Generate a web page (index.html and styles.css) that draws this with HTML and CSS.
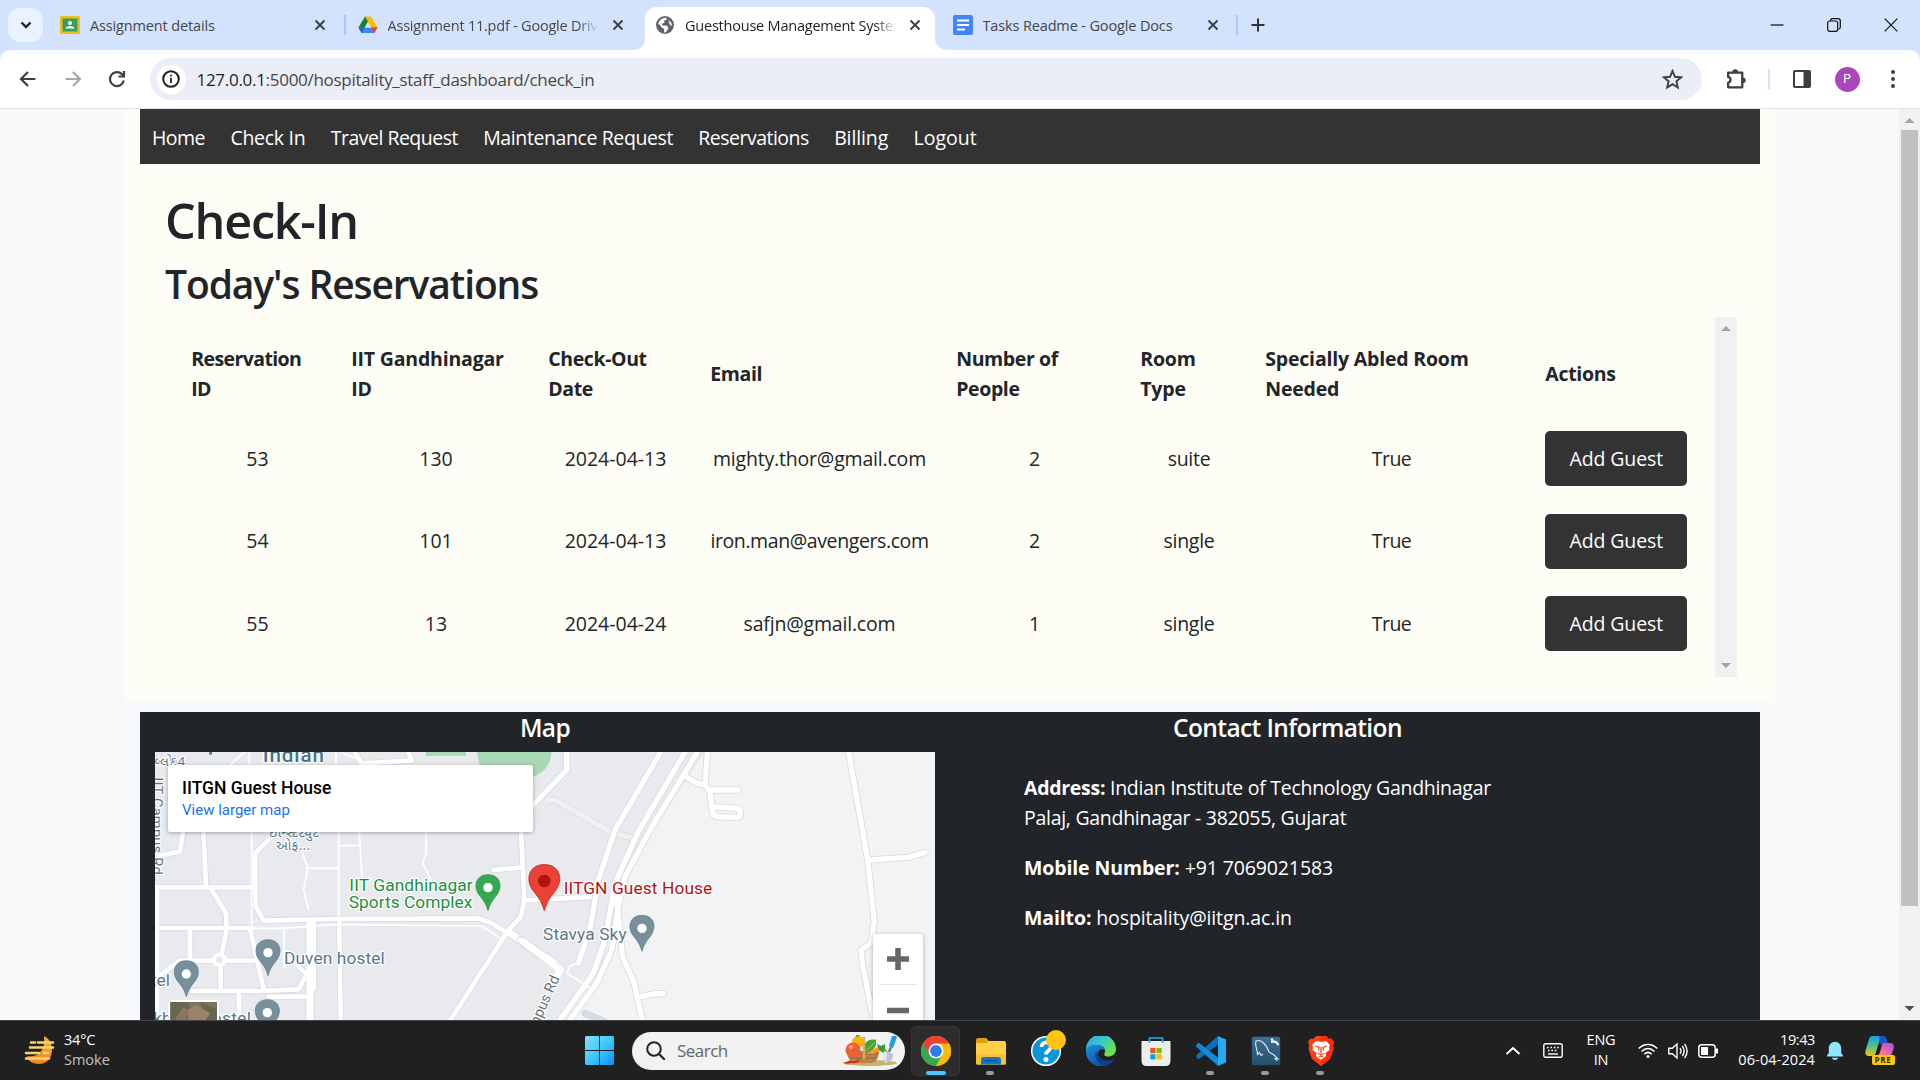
FILE: index.html
```html
<!DOCTYPE html>
<html lang="en">
<head>
<meta charset="utf-8">
<title>Guesthouse Management System</title>
<link rel="stylesheet" href="styles.css">
</head>
<body>
<div class="screen">
  <header class="tabstrip">
    <button class="tab-search"><svg width="14" height="14" viewBox="0 0 14 14" fill="none" stroke="#1f1f1f" stroke-width="2.4"><path d="M2.5 4.5 7 9l4.500-4.500"/></svg></button>
    <div class="tab sep">
      <svg class="fav" viewBox="0 0 20 20"><rect y="1" width="20" height="18" rx="1.500" fill="#f6bd18"/><rect x="2.500" y="3.500" width="15" height="13" fill="#34a05c"/><circle cx="10" cy="8" r="2" fill="#fff"/><path d="M5.500 13.500c0-3.500 9-3.500 9 0z" fill="#fff"/></svg>
      <span class="tab-title">Assignment details</span>
      <svg class="x" viewBox="0 0 20 20"><path d="M5.500 5.500l9 9M14.500 5.500l-9 9"/></svg>
    </div>
    <div class="tab">
      <svg class="fav" viewBox="0 0 20 20"><path d="M7 1.500h6l6.500 11H13z" fill="#fbbc04"/><path d="M7 1.500 10 6.500 3.700 18 .5 12.500z" fill="#188038"/><path d="M.5 12.500h19L16.300 18H3.700z" fill="#4285f4"/><path d="M.5 12.500h6.300L3.700 18z" fill="#1967d2"/><path d="M13.200 12.500h6.300L16.300 18z" fill="#ea4335"/><path d="M10 7l3 5.500H7z" fill="#d3e2fd"/></svg>
      <span class="tab-title fade">Assignment 11.pdf - Google Drive</span>
      <svg class="x" viewBox="0 0 20 20"><path d="M5.500 5.500l9 9M14.500 5.500l-9 9"/></svg>
    </div>
    <div class="tab active">
      <svg class="tab-shape" viewBox="0 0 316 43"><path d="M0 43c8 0 12-5 12-12V12C12 5 17 0 24 0h266c7 0 12 5 12 12v19c0 7 5 12 14 12z" fill="#fff"/></svg>
      <svg class="fav" viewBox="0 0 20 20"><circle cx="10" cy="10" r="9" fill="#5f6368"/><path d="M3 9c1-4 4-6.300 8-6.300l1 1.800-3 1.300.5 2-2.500 1 .3 1.700 4.700.2 1.500 2.300-2.500 4.300-2 .2.200-3.500-2.700-1.700L5 10z" fill="#fff"/><path d="M13.500 5l3 2.500.8 4-3.300-2.500z" fill="#fff" opacity=".8"/></svg>
      <span class="tab-title fade">Guesthouse Management System</span>
      <svg class="x" viewBox="0 0 20 20"><path d="M5.500 5.500l9 9M14.500 5.500l-9 9"/></svg>
    </div>
    <div class="tab sep">
      <svg class="fav" viewBox="0 0 20 20"><rect width="20" height="20" rx="2" fill="#4285f4"/><path d="M4 5.500h12M4 10h12M4 14.500h8" stroke="#fff" stroke-width="2"/></svg>
      <span class="tab-title">Tasks Readme - Google Docs</span>
      <svg class="x" viewBox="0 0 20 20"><path d="M5.500 5.500l9 9M14.500 5.500l-9 9"/></svg>
    </div>
    <svg class="new-tab" viewBox="0 0 20 20" stroke="#303134" stroke-width="2"><path d="M10 3.500v13M3.500 10h13"/></svg>
    <div class="win-controls">
      <svg viewBox="0 0 14 14"><path d="M.5 7h13"/></svg>
      <svg viewBox="0 0 14 14"><rect x=".7" y="3" width="10" height="10.300" rx="2"/><path d="M3.500 3V2.500A1.800 1.800 0 0 1 5 .7h6a2.300 2.300 0 0 1 2.300 2.300v6.500a1.800 1.800 0 0 1-1.800 1.500"/></svg>
      <svg viewBox="0 0 14 14"><path d="M.7.700l12.600 12.600M13.300.700.7 13.300"/></svg>
    </div>
  </header>

  <div class="toolbar-back"><div class="toolbar">
    <svg class="tb" viewBox="0 0 20 20" stroke="#3c4043"><path d="M17.500 10H3.500M10 3 3 10l7 7"/></svg>
    <svg class="tb" viewBox="0 0 20 20" stroke="#a8a9ab"><path d="M2.500 10h14M10 3l7 7-7 7"/></svg>
    <svg class="tb" viewBox="0 0 20 20" stroke="#3c4043"><path d="M16.800 11.500A7 7 0 1 1 15 5.200l2 2"/><path d="M17 2v5.500h-5.500"/></svg>
    <div class="omnibox">
      <span class="info"><svg width="20" height="20" viewBox="0 0 20 20"><circle cx="10" cy="10" r="7.800" fill="none" stroke="#1f1f1f" stroke-width="2"/><path d="M10 9v5M10 5.800v1.700" stroke="#1f1f1f" stroke-width="1.800"/></svg></span>
      <span class="url"><b>127.0.0.1</b>:5000/hospitality_staff_dashboard/check_in</span>
      <svg class="star" viewBox="0 0 20 20"><path d="M10 1.800l2.300 5.600 6 .5-4.600 3.900 1.400 5.900-5.100-3.200-5.100 3.200 1.400-5.900L1.700 7.900l6-.5z" fill="none" stroke="#3c4043" stroke-width="1.800"/></svg>
    </div>
    <svg class="puzzle" viewBox="0 0 22 22"><path d="M3 4.500h13.500V18.500H3v-4.500c3-.5 3-5 0-5.500z" fill="none" stroke="#3c4043" stroke-width="2.200" stroke-linejoin="round"/><path d="M7.500 4a2.300 2.300 0 0 1 4.600 0zM17 9.500a2.300 2.300 0 0 1 0 4.600z" fill="#3c4043" stroke="#3c4043"/></svg>
    <span class="tb-sep"></span>
    <svg class="panel" viewBox="0 0 20 20"><rect x="2" y="2" width="16" height="16" rx="1" fill="none" stroke="#3c4043" stroke-width="2"/><path d="M11.500 2H18v16h-6.500z" fill="#3c4043"/></svg>
    <span class="avatar">P</span>
    <svg class="kebab" viewBox="0 0 6 20" fill="#3c4043"><circle cx="3" cy="3" r="2"/><circle cx="3" cy="10" r="2"/><circle cx="3" cy="17" r="2"/></svg>
  </div></div>

  <div class="viewport">
    <div class="page">
      <main class="container">
        <nav class="navbar">
          <a class="t5">Home</a><a class="t3">Check In</a><a class="t5">Travel Request</a><a class="t4">Maintenance Request</a><a class="t5">Reservations</a><a class="t1">Billing</a><a>Logout</a>
        </nav>
        <section class="content">
          <h1>Check-In</h1>
          <h2>Today's Reservations</h2>
          <div class="list">
            <table>
              <colgroup><col class="c1"><col class="c2"><col class="c3"><col class="c4"><col class="c5"><col class="c6"><col class="c7"><col class="c8"></colgroup>
              <thead><tr><th class="t6">Reservation<br>ID</th><th class="t2">IIT Gandhinagar<br>ID</th><th class="t4">Check-Out<br>Date</th><th class="t4">Email</th><th class="t4">Number of<br>People</th><th class="t2">Room<br>Type</th><th class="t2">Specially Abled Room<br>Needed</th><th class="t3">Actions</th></tr></thead>
              <tbody>
                <tr><td>53</td><td>130</td><td>2024-04-13</td><td class="t2">mighty.thor@gmail.com</td><td>2</td><td class="t3">suite</td><td class="t5">True</td><td><button class="btn">Add Guest</button></td></tr>
                <tr><td>54</td><td>101</td><td>2024-04-13</td><td class="t4">iron.man@avengers.com</td><td>2</td><td class="t3">single</td><td class="t5">True</td><td><button class="btn">Add Guest</button></td></tr>
                <tr><td>55</td><td>13</td><td>2024-04-24</td><td class="t2">safjn@gmail.com</td><td>1</td><td class="t3">single</td><td class="t5">True</td><td><button class="btn">Add Guest</button></td></tr>
              </tbody>
            </table>
            <div class="list-scroll"><span class="up"></span><span class="down"></span></div>
          </div>
        </section>
      </main>
      <footer class="footer">
        <div class="map-col">
          <h5>Map</h5>
          <div class="map">
            <svg width="780" height="268" viewBox="0 0 780 268">
              <rect width="780" height="268" fill="#e8eaed"/>
              <g transform="translate(-35 -62) scale(.33333)">
                <path d="M1755 186 1560 480 1480 700 1440 850 1310 1000H2500V186z" fill="#f1f3f4"/>
                <path d="M918 180h120v17H918zM1072 186h222c0 40-30 80-90 80h-90c-30-20-42-50-42-80z" fill="#a8d8b4"/>
                <g class="rd edge">
                  <path class="w3" d="M105 592H402M105 714H400M105 499 180 485 190 420M250 420l8 170M405 570V490L470 425M272 595l46 75 2 45-18 95v90M405 490l2 160 25 42 210-5 435-2 38 15 190 115M210 714v95M390 714l40 180M178 812H400M178 812l-60 45M215 903l200 0 120-5 25-45-50-45M705 190l20 30 150-8-12-30M357 905V995M445 920h110M1120 540l85-8M1203 420l10 210-10 50L1165 720 985 1000M1210 632l210-12M658 695 662 1000"/>
                  <path class="w5" d="M570 700V990M578 700V895M1165 725l120 85"/>
                </g>
                <g class="rd">
                  <path class="w1" d="M395 430V715h90l160-12 440 5 62 40M492 712v120M548 490l15 45-12 65 15 60M560 535h95M656 430V690M656 467h62M718 430l8 130M918 430v60l-10 30 40 80M668 190l38 15M330 225l45-40M648 190V225M388 190V225"/>
                  <path class="w3" d="M105 592H402M105 714H400M105 499 180 485 190 420M250 420l8 170M405 570V490L470 425M272 595l46 75 2 45-18 95v90M405 490l2 160 25 42 210-5 435-2 38 15 190 115M210 714v95M390 714l40 180M178 812H400M178 812l-60 45M215 903l200 0 120-5 25-45-50-45M705 190l20 30 150-8-12-30M357 905V995M445 920h110M1120 540l85-8M1203 420l10 210-10 50L1165 720 985 1000M1210 632l210-12M658 695 662 1000"/>
                  <path class="w5" d="M570 700V990M578 700V895M1165 725l120 85"/>
                  <circle cx="298" cy="810" r="22" fill="#fff"/><circle cx="298" cy="810" r="8" fill="#e8eaed" stroke="#d5d9df" stroke-width="2"/>
                  <path class="w3" d="M110 590V1000"/>
                </g>
              </g>
              <g transform="translate(375 -62) scale(.33333)">
                <path d="M50 330 75 330 245 428 315 445" fill="none" stroke="#d9dce1" stroke-width="21"/>
                <path d="M50 330 75 330 245 428 315 445" fill="none" stroke="#f0f0f1" stroke-width="16"/>
                <g class="rd edge">
                  <path class="w4" d="M-10 365 110 240V180M392 186 255 420 205 570 180 715 145 820M465 186 325 425 255 580 225 750 190 850 90 990M500 190 360 420 285 560 265 650 245 780 200 880 120 990M460 255l40 25 25 5 7-95M525 285l15 20 8 65 10 10 65 2c12 0 12-26-5-28l-62-3M545 300h80M955 180l58 330 20 185-10 65-30 20 5 45 35 175M1015 510l120-8 50-15M258 620l20 180 35 80 25 115M320 922l55-11h24M-30 750l115 85M165 970l60 25"/>
                </g>
                <g class="rd">
                  <path class="w4" d="M-10 365 110 240V180M392 186 255 420 205 570 180 715 145 820M465 186 325 425 255 580 225 750 190 850 90 990M500 190 360 420 285 560 265 650 245 780 200 880 120 990M460 255l40 25 25 5 7-95M525 285l15 20 8 65 10 10 65 2c12 0 12-26-5-28l-62-3M545 300h80M955 180l58 330 20 185-10 65-30 20 5 45 35 175M1015 510l120-8 50-15M258 620l20 180 35 80 25 115M320 922l55-11h24M-30 750l115 85"/>
                  <path class="w5" d="M-20 755 85 835M75 870l15-30"/>
                  <path class="w1" d="M145 820l-25 8-8 22 70 45"/>
                </g>
              </g>
              <g transform="translate(-35 -62) scale(.33333)" class="labels">
                <text x="428" y="217" class="big" textLength="184">Indian</text>
                <text x="98" y="228" class="guj" textLength="92">બ્લોક-4</text>
                <text x="446" y="440" class="guj" textLength="150">ઇન્સ્ટિટ્યુટ</text>
                <text x="468" y="480" class="guj" textLength="102">ઓફ...</text>
                <text transform="translate(96 262) rotate(90)" class="road" textLength="292">IIT Campus Rd</text>
                <path d="M272 186v8" stroke="#4f7388" stroke-width="8"/>
                <text x="688" y="603" class="green" textLength="370">IIT Gandhinagar</text>
                <text x="686" y="655" class="green" textLength="371">Sports Complex</text>
                <text x="492" y="823" class="poi" textLength="302">Duven hostel</text>
                <text x="35" y="887" class="poi" textLength="115">ostel</text>
                <text x="100" y="1002" class="poi">kh</text>
                <text x="275" y="1002" class="poi" textLength="118">ostel</text>
                <text x="1331" y="611" class="red" textLength="446">IITGN Guest House</text>
                <text x="1269" y="750" class="poi" textLength="251">Stavya Sky</text>
                <text transform="translate(1240 1042) rotate(-66)" class="road" textLength="195">ampus Rd</text>
              </g>
              <defs><path id="pin" d="M0 0C-4-14-10-28-24-44-46-70-38-108 0-108S46-70 24-44C10-28 4-14 0 0z"/></defs>
              <g transform="translate(-35 -62) scale(.33333)">
                <g fill="#78909c" stroke="#5b7684" stroke-width="2">
                  <use href="#pin" x="199" y="920"/><use href="#pin" x="444" y="857"/><use href="#pin" x="442" y="1037"/><use href="#pin" x="1566" y="784"/>
                </g>
                <use href="#pin" x="1104" y="662" fill="#34a853" stroke="#1e8e3e" stroke-width="2"/>
                <g fill="#fff"><circle cx="199" cy="852" r="14"/><circle cx="444" cy="788" r="14"/><circle cx="442" cy="968" r="14"/><circle cx="1104" cy="593" r="14"/><circle cx="1566" cy="715" r="14"/></g>
                <use href="#pin" transform="translate(1273 662) scale(1.280)" fill="#ea4335" stroke="#c5221f" stroke-width="2"/><circle cx="1273" cy="573" r="19" fill="#b31412"/>
                <path d="M145 1000v-62q0-8 8-8h136q8 0 8 8v62z" fill="#fff"/><path d="M151 936h140v60H151z" fill="#7d7560"/><path d="M151 936h50l20 30-40 34h-30zM240 936l51 20v40h-30z" fill="#65684f"/><path d="M200 960l30-15 40 25-20 30h-40z" fill="#998468"/><path d="M170 980l20-30 15 10-10 40h-30z" fill="#88755c"/>
              </g>
            </svg>
            <div class="place-card"><b>IITGN Guest House</b><span>View larger map</span></div>
            <div class="zoom-ctl"><svg width="50" height="92" viewBox="0 0 50 92"><path d="M14 25h22M25 14v22M14 76.500h22" stroke="#666" stroke-width="5.500"/><path d="M6 50.500h38" stroke="#e6e6e6"/></svg></div>
          </div>
        </div>
        <div class="contact-col">
          <h5>Contact Information</h5>
          <div class="contact">
            <p class="t3"><b>Address:</b> Indian Institute of Technology Gandhinagar<br>Palaj, Gandhinagar - 382055, Gujarat</p>
            <p class="t1"><b>Mobile Number:</b> +91 7069021583</p>
            <p class="t1"><b>Mailto:</b> hospitality@iitgn.ac.in</p>
          </div>
        </div>
      </footer>
    </div>
    <div class="page-scroll"><span class="up"></span><span class="thumb"></span><span class="down dark"></span></div>
  </div>

  <div class="taskbar">
    <svg class="weather" width="32" height="32" viewBox="0 0 32 32"><defs><linearGradient id="moon" x2="0" y2="1"><stop stop-color="#e8b53a"/><stop offset="1" stop-color="#f0821d"/></linearGradient></defs><path d="M20 1c12 5 11 28-5 28C7 29 4 25 3 21c11 2 19-6 17-20z" fill="url(#moon)"/><path d="M7 7.500h4M14 7.500h15M6 12.500h23M2 18h13M20 18h4M2 23.500h23" stroke="#f6d36e" stroke-width="2.600" stroke-linecap="round"/></svg>
    <div class="weather-text"><b class="t2">34°C</b><span>Smoke</span></div>
    <svg class="start" width="29" height="29" viewBox="0 0 29 29"><defs><linearGradient id="win" x2="1" y2="1"><stop stop-color="#84e0ff"/><stop offset=".5" stop-color="#3fc8fb"/><stop offset="1" stop-color="#0a90f5"/></linearGradient></defs><path d="M1 0h13v14H0V1zM15 0h13l1 1v13H15zM0 15h14v14H1l-1-1zM15 15h14v13l-1 1H15z" fill="url(#win)"/></svg>
    <div class="search">
      <svg width="20" height="20" viewBox="0 0 20 20" fill="none" stroke="#252525"><circle cx="8" cy="8" r="6.800" stroke-width="2"/><path d="M13 13l5 5" stroke-width="2.400" stroke-linecap="round"/></svg>
      <span class="t5">Search</span>
      <svg class="basket" width="58" height="32" viewBox="0 0 58 32"><ellipse cx="30" cy="28" rx="27" ry="3" fill="#c9b36a"/><path d="M7 16h32c0 8-4 12-8 12H15c-5 0-8-6-8-12z" fill="#b9824a"/><path d="M9 19h29M10 23h26" stroke="#8b5a2b" stroke-width=".8"/><circle cx="18" cy="7" r="6" fill="#f7b500"/><path d="M17 2q0-3 3-2" stroke="#57962b" stroke-width="2" fill="none"/><circle cx="13" cy="15" r="7.500" fill="#ee6036"/><circle cx="11" cy="12" r="2" fill="#ffa17d"/><path d="M23 16c0-8 6-13 13-11 1 7-3 12-11 13z" fill="#47a334"/><path d="M25 17l10-10" stroke="#91cf5e"/><path d="M26 19l13-8 3 3-9 5z" fill="#ff9624"/><path d="M37 9l4 2 4-2v5l3 3-5 1-4-3z" fill="#3f9b32"/><path d="M24 24V2" stroke="#e1a860" stroke-width="2.500"/><path d="M52 1q4-1 5 1l-4 11-4-2z" fill="#1e9be3"/><path d="M51 12l-2 5" stroke="#787b88" stroke-width="2.500"/><path d="M44 16l9 3-1 6-7 4-2-6z" fill="#b9c6d1"/><path d="M47 17l-1 11-3-5 1-7z" fill="#e3eaf0"/><path d="M2 27c4 3 6-3 10-1 2 1 6-1 8-3-1 5-5 6-9 5-3 1-7 1-9-1z" fill="#d12d1e"/></svg>
    </div>
    <div class="apps">
      <div class="app current"><svg viewBox="0 0 30 30"><circle cx="15" cy="15" r="15" fill="#fbbc04"/><path d="M15 15 2 7.500A15 15 0 0 0 15 30l6.500-11.200z" fill="#34a853"/><path d="M2 7.500A15 15 0 0 1 28 7.500H15L8.500 18.800z" fill="#ea4335"/><path d="M28 7.500A15 15 0 0 1 15 30l6.500-11.200L22 11z" fill="#fbbc04"/><circle cx="15" cy="15" r="7.500" fill="#fff"/><circle cx="15" cy="15" r="5.900" fill="#2f7cf0"/></svg></div>
      <div class="app open"><svg viewBox="0 0 30 30"><path d="M0 4q0-2 2-2h8l3 3v7H0z" fill="#e0a008"/><path d="M0 7h10l3-2h15q2 0 2 2v20q0 1.500-1.500 1.500h-27Q0 28.500 0 27z" fill="#ffcf48"/><path d="M0 18h30v9q0 1.500-1.500 1.500h-27Q0 28.500 0 27z" fill="#f9c02f"/><path d="M5 28.500V24q0-3 3-3h14q3 0 3 3v4.500z" fill="#0f76cc"/><path d="M9 24.700h12" stroke="#0a4b94" stroke-width="1.300"/></svg></div>
      <div class="app"><svg viewBox="0 0 30 30"><circle cx="15" cy="15" r="14.300" fill="#0b96d8" stroke="#fff" stroke-width="1.500"/><path d="M10.500 11c0-6 9.500-6 9.500-.5 0 4-5 4-5 8" fill="none" stroke="#fff" stroke-width="3.800"/><circle cx="15" cy="23.500" r="2.500" fill="#fff"/></svg><span class="badge"></span></div>
      <div class="app"><svg viewBox="0 0 30 30"><defs><linearGradient id="e1" x2="1" y2=".6"><stop stop-color="#2ba5dc"/><stop offset=".5" stop-color="#36c6cf"/><stop offset="1" stop-color="#6fe345"/></linearGradient><linearGradient id="e2" x2=".6" y2="1"><stop stop-color="#1b8fdf"/><stop offset="1" stop-color="#0b4f9f"/></linearGradient></defs><path d="M0 14A15 15 0 0 1 30 13c0 5-4 7.500-7.500 7.500-3 0-5-1-4-3 2-5-2-8-6-8C6 9 2 11 0 15z" fill="url(#e1)"/><path d="M0 15C1 10 6 8 11 9c4 0 7 2 8 5-5-2-7 1-7 4 0 6 8 9 16 5A15 15 0 0 1 0 15z" fill="url(#e2)"/><path d="M10 15c-3 8 3 14 9 14.500 3-.5 7-2.500 9.500-6.500-8 4-15 0-16-4z" fill="#0d3f8f"/></svg></div>
      <div class="app"><svg viewBox="0 0 30 30"><path d="M8.500 8V2h13v6" fill="none" stroke="#29a9e8" stroke-width="1.700"/><path d="M.5 5h29v20q0 5-5 5H5.500q-5 0-5-5z" fill="#eceded"/><path d="M8.500 7V5h13v2" fill="none" stroke="#29a9e8" stroke-width="1.700" stroke-dasharray="2 13 2"/><path d="M9.300 12h5.200v5.200H9.300z" fill="#f25022"/><path d="M15.500 12h5.200v5.200h-5.200z" fill="#7fba00"/><path d="M9.300 18.200h5.200v5.200H9.300z" fill="#00a4ef"/><path d="M15.500 18.200h5.200v5.200h-5.200z" fill="#ffb900"/></svg></div>
      <div class="app open"><svg viewBox="0 0 30 30"><path d="M22 0 30 3.500v23L22 30z" fill="#2aa8f2"/><path d="M22 0v8.500L4 22.500Q2.500 23.500 1.300 22.300L.5 21q-1-1 0-2z" fill="#0a6fbd"/><path d="M22 30V21.500L4 7.500Q2.500 6.500 1.300 7.700L.5 9q-1 1 0 2z" fill="#1588d6"/></svg></div>
      <div class="app open"><svg viewBox="0 0 30 30"><defs><linearGradient id="my" x2="0" y2="1"><stop stop-color="#3a6f94"/><stop offset="1" stop-color="#24506f"/></linearGradient></defs><rect x=".8" y=".8" width="28.400" height="28.400" rx="2" fill="url(#my)"/><path d="M10 19.500l-1.500-3-2 2C6 12 3.500 8 5 5c5-2 10 3 13 11l5 3 4 4-3-.5 2 2.500M10 19.500l2-1.500" fill="none" stroke="#dce6ee" stroke-width="1.100"/><path d="M20.500 2.500l1.500 3 3 .5 2.500 3M22 5.500l-2 .5" stroke="#fff" stroke-width="2" fill="none"/></svg></div>
      <div class="app open"><svg viewBox="0 0 30 30"><path d="M10 0h10l3 3 2.500-.5L28 6l-1 3 .5 4L24 23l-9 7-9-7L2.500 13 3 9 2 6l2.500-3.500L7 3z" fill="#fb4114"/><path d="M15 0h5l3 3 2.500-.5L28 6l-1 3 .5 4L24 23l-9 7z" fill="#ff2d0a"/><path d="M10 5l5 1 5-1 4 4-1 2 .5 3-4 3 .5 3-5 4-5-4 .5-3-4-3L7 11 6 9z" fill="#fff"/><path d="M9 10l4 1.500-.5 3M21 10l-4 1.500.5 3M15 11v6M11.500 17.500l3.500 1 3.500-1M13 21l2-1 2 1" stroke="#fb4114" stroke-width="1.300" fill="none"/></svg></div>
    </div>
    <div class="tray">
      <svg class="chev" width="16" height="10" viewBox="0 0 16 10"><path d="M1.500 8 8 2l6.500 6" fill="none" stroke="#fff" stroke-width="2"/></svg>
      <svg class="kbd" width="20" height="15" viewBox="0 0 20 15"><rect x=".8" y=".8" width="18.400" height="13.400" rx="1.800" fill="none" stroke="#fff" stroke-width="1.400"/><path d="M4 4.500h12M5 7.500h10" stroke="#fff" stroke-width="1.600" stroke-dasharray="1.600 1.800"/><path d="M5 11h10" stroke="#fff" stroke-width="1.400"/></svg>
      <div class="lang t2">ENG<br>IN</div>
      <svg class="wifi" width="20" height="16" viewBox="0 0 20 16" fill="none" stroke="#fff" stroke-width="1.500"><path d="M.7 5.500c5.300-5.500 13.300-5.500 18.600 0M3.600 8.400c3.700-3.800 9.100-3.800 12.800 0M6.300 11.200c2.200-2.200 5.200-2.200 7.400 0"/><circle cx="10" cy="13.500" r="1.500" fill="#fff" stroke="none"/></svg>
      <svg class="spk" width="20" height="18" viewBox="0 0 20 18" fill="none" stroke="#fff" stroke-width="1.400"><path d="M.8 6.200h3.500L9 2v14L4.300 11.800H.8zM12 6.200q2 2.800 0 5.600M14.300 4q3.600 5 0 10M16.600 1.800q5 7.200 0 14.400"/></svg>
      <svg class="bat" width="20" height="14" viewBox="0 0 20 14"><rect x=".8" y=".8" width="16.400" height="12.400" rx="3" fill="none" stroke="#fff" stroke-width="1.500"/><path d="M3 3h7v8H3z" fill="#fff"/><path d="M18 4.500h2v5h-2z" fill="#fff"/></svg>
      <div class="clock"><span class="t4">19:43</span><br>06-04-2024</div>
      <svg class="bell" width="18" height="20" viewBox="0 0 18 20" fill="#8fe6ff"><path d="M1 14.500 2.800 12V7.500C2.800 3.500 5.500.7 9 .7s6.200 2.800 6.200 6.800V12l1.800 2.500v1H1zM6 16.800h6c-.5 3-5.500 3-6 0z"/></svg>
      <svg class="copilot" width="30" height="29" viewBox="0 0 30 29"><defs><linearGradient id="cp" x2="0" y2="1"><stop stop-color="#13a1ee"/><stop offset=".5" stop-color="#52c08c"/><stop offset="1" stop-color="#f0c514"/></linearGradient><linearGradient id="cq" x1="1" x2="0" y2="1"><stop stop-color="#9b51f3"/><stop offset=".6" stop-color="#f46a98"/><stop offset="1" stop-color="#ff9a42"/></linearGradient></defs><path d="M7 0h9l-5 16q-1 4-4 4H3Q-1 19 1 13L4 3q1-3 3-3z" fill="url(#cp)"/><path d="M14 0h4q3 0 4 4l1 3h-3q-3 0-4 3z" fill="#1f55c7"/><path d="M18 7h8q4 1 2.500 6L26 20H11q3 0 4-4l2-7z" fill="url(#cq)"/><rect x="7" y="19" width="23" height="10" rx="2" fill="#ffc800"/><text x="9.500" y="27.200" class="pre">PRE</text></svg>
    </div>
  </div>
</div>
</body>
</html>
```
FILE: styles.css
```css
* { box-sizing: border-box; }
body { margin: 0; overflow: hidden; font-family: "Open Sans", "Noto Sans", sans-serif; color: #212529; }
svg { display: block; flex: none; }
p, h1, h2, h5 { margin: 0; }
button { border: 0; padding: 0; font: inherit; }
.screen { width: 1920px; height: 1080px; display: grid; grid-template-rows: 50px 59px 911px 60px; overflow: hidden; }

/* Tracking steps */
.t1 { letter-spacing: -.12px; }
.t2 { letter-spacing: -.19px; }
.t3 { letter-spacing: -.28px; }
.t4 { letter-spacing: -.4px; }
.t5 { letter-spacing: -.52px; }
.t6 { letter-spacing: -.6px; }

/* Browser tabs */
.tabstrip { display: flex; align-items: center; background: #d3e2fd; padding-left: 8px; }
.tab-search { width: 35px; height: 34px; border-radius: 12px; background: #ebf2ff; display: grid; place-items: center; margin-right: 5px; }
.tab { width: 297.5px; height: 43px; margin-top: 7px; padding: 0 15.5px 7px 12px; display: flex; align-items: center; position: relative; }
.tab.sep::after { content: ""; position: absolute; right: 0; top: 8px; width: 2px; height: 20px; background: #a8c7fa; }
.fav { width: 20px; height: 20px; margin-right: 10px; position: relative; }
.tab-title { flex: 1; font-size: 14.5px; letter-spacing: -.14px; color: #45474a; white-space: nowrap; overflow: hidden; position: relative; margin-right: 9px; }
.active .tab-title { color: #1f1f1f; }
.fade { letter-spacing: -.22px; -webkit-mask-image: linear-gradient(90deg, #000 90%, transparent 100%); mask-image: linear-gradient(90deg, #000 90%, transparent 100%); }
.x { width: 20px; height: 20px; position: relative; stroke: #3c4043; stroke-width: 1.900; }
.tab-shape { position: absolute; left: -10px; top: 0; width: 316px; height: 43px; }
.new-tab { width: 20px; height: 20px; margin-left: 10px; }
.win-controls { margin-left: auto; margin-right: 22px; display: flex; gap: 43px; }
.win-controls svg { width: 14px; height: 14px; fill: none; stroke: #111; stroke-width: 1.200; }

/* Browser toolbar */
.toolbar-back { background: #d3e2fd; }
.toolbar { height: 59px; background: #fff; border-radius: 10px 10px 0 0; border-bottom: 1px solid #dfe1e5; display: flex; align-items: center; padding-left: 18px; }
.tb { width: 20px; height: 20px; fill: none; stroke-width: 2.200; margin-right: 24.500px; }
.omnibox { width: 1552px; height: 42px; border-radius: 21px; background: #ebeef7; display: flex; align-items: center; padding: 0 19px 0 7px; margin-left: -2px; }
.info { width: 29px; height: 29px; border-radius: 50%; background: #fff; display: grid; place-items: center; margin-right: 11px; }
.url { font-size: 17px; letter-spacing: -.29px; color: #474747; flex: 1; white-space: nowrap; }
.url b { font-weight: 400; color: #1f1f1f; }
.star { width: 21px; height: 21px; }
.puzzle { width: 23px; height: 23px; margin-left: 23px; }
.tb-sep { width: 2px; height: 20px; background: #d3e2fd; margin: 0 22px 0 20px; }
.panel { width: 20px; height: 20px; margin-right: 23px; }
.avatar { width: 25px; height: 25px; border-radius: 50%; background: #ab47bc; color: #fff; font: 12px/25px Roboto, sans-serif; text-align: center; margin-right: 30px; }
.kebab { width: 6px; height: 20px; }

/* Page */
.viewport { display: grid; grid-template-columns: 1899px 21px; overflow: hidden; background: #f8f9fb; }
.page { padding: 0 124px 0 125px; overflow: hidden; }
.container { height: 593px; background: #fdfdf5; padding: 0 15px; }
.navbar { height: 55px; background: #333; display: flex; align-items: center; gap: 25.400px; padding: 3px 12px 0; margin-bottom: 22px; }
.navbar a { color: #fff; font-size: 19.500px; line-height: 30px; }
.content { padding: 0 23px 0 25px; }
h1 { font-size: 48.500px; line-height: 60px; font-weight: 600; letter-spacing: -1.200px; margin-bottom: 10px; padding-top: 4px; }
h2 { font-size: 39px; line-height: 48px; font-weight: 600; letter-spacing: -1.100px; margin-bottom: 9px; }
.list { height: 360px; display: grid; grid-template-columns: 1fr 22px; }
table { margin: 13px 0 0 12.500px; width: 1524px; table-layout: fixed; border-collapse: collapse; font-size: 19.500px; line-height: 30px; align-self: start; }
th, td { padding: 13.750px; text-align: center; white-space: nowrap; }
th { text-align: left; font-weight: 700; }
td { font-weight: 400; }
.c1 { width: 160px; } .c2 { width: 197px; } .c3 { width: 162px; } .c4 { width: 246px; }
.c5 { width: 184px; } .c6 { width: 125px; } .c7 { width: 280px; } .c8 { width: 170px; }
.btn { display: block; width: 142px; height: 55px; border-radius: 5px; background: #333; color: #fff; letter-spacing: -.1px; }
.list-scroll, .page-scroll { background: #f1f1f1; display: flex; flex-direction: column; align-items: center; padding: 9px 0; justify-content: space-between; }
.up, .down { width: 10px; height: 5px; background: #a3a3a3; }
.up { clip-path: polygon(50% 0, 100% 100%, 0 100%); }
.down { clip-path: polygon(0 0, 100% 0, 50% 100%); }
.down.dark { background: #505050; }
.page-scroll .thumb { width: 17px; height: 776px; background: #c1c1c1; margin: 7px 0 auto; }

/* Footer */
.footer { margin: 10px 15px 0; height: 320px; background: #212529; color: #fff; display: flex; }
.map-col { width: 810px; padding: 0 15px; flex: none; }
.contact-col { width: 675px; }
h5 { font-size: 24.500px; line-height: 30px; font-weight: 600; letter-spacing: -.6px; text-align: center; padding-top: 1px; margin-bottom: 9px; }
.map { height: 268px; position: relative; overflow: hidden; }
.rd path { fill: none; stroke: #fff; stroke-linejoin: round; stroke-linecap: round; }
.rd .w1 { stroke-width: 5; } .rd .w3 { stroke-width: 14; } .rd .w4 { stroke-width: 16; } .rd .w5 { stroke-width: 21; }
.edge path { stroke: #d7dbe1; }
.edge .w3 { stroke-width: 19; } .edge .w4 { stroke-width: 21; } .edge .w5 { stroke-width: 27; }
.labels { font-family: Roboto, "Noto Sans", sans-serif; font-size: 52px; paint-order: stroke; stroke: #fff; stroke-width: 7px; stroke-linejoin: round; fill: #5b7684; }
.labels .big { font-size: 62px; font-weight: 500; fill: #4a7286; }
.labels .guj { font-size: 40px; font-family: "Noto Sans Gujarati", "Noto Sans", sans-serif; }
.labels .green { fill: #1e8e3e; }
.labels .red { fill: #b31412; }
.labels .road { font-size: 44px; fill: #6a737c; }
.place-card { position: absolute; left: 13px; top: 13px; width: 365px; height: 67px; background: #fff; border-radius: 2px; box-shadow: 0 1px 4px rgba(0,0,0,.3); padding: 12px 14px; font-family: Roboto, sans-serif; }
.place-card b { display: block; font-size: 17.500px; line-height: 22px; font-weight: 500; color: #000; }
.place-card span { display: block; font-size: 15px; line-height: 22px; color: #1a73e8; }
.zoom-ctl { position: absolute; left: 718px; top: 182px; width: 50px; height: 100px; background: #fff; border-radius: 2px; box-shadow: 0 1px 4px rgba(0,0,0,.3); }
.contact { padding: 21px 0 0 74px; font-size: 19.500px; line-height: 30px; white-space: nowrap; }
.contact p { margin-bottom: 20px; }

/* Taskbar */
.taskbar { background: #202020; border-top: 1px solid #434648; display: flex; align-items: center; color: #fff; font-size: 14.500px; line-height: 20px; position: relative; z-index: 1; }
.weather { margin-left: 24px; margin-right: 8px; }
.weather-text { width: 521px; padding-bottom: 2px; }
.weather-text b, .weather-text span { display: block; font-weight: 400; }
.weather-text span { color: #c4c4c4; }
.start { margin-right: 18px; }
.search { width: 273px; height: 38px; border-radius: 19px; background: #f2f2f2; color: #666; display: flex; align-items: center; font-size: 17px; padding: 0 7px 0 14px; }
.search span { margin-left: 11px; flex: 1; }
.apps { display: flex; gap: 6px; margin-left: 6px; }
.app { width: 49px; height: 50px; border-radius: 5px; display: grid; place-items: center; position: relative; }
.app svg { width: 30px; height: 30px; }
.current { background: #2d2d2d; border: 1px solid #363636; }
.current::after, .open::after { content: ""; position: absolute; bottom: 1px; left: 20px; width: 8px; height: 4px; border-radius: 2px; background: #9a9a9a; }
.current::after { width: 20px; left: 14px; bottom: 0; background: #4cc2ff; }
.badge { position: absolute; left: 25px; top: 4px; width: 20px; height: 20px; border-radius: 50%; background: #ffc20e; }
.tray { margin-left: auto; display: flex; align-items: center; margin-right: 25px; }
.kbd { margin-left: 22px; }
.lang { width: 40px; margin-left: 18px; text-align: center; padding-bottom: 1px; }
.wifi { margin-left: 17px; } .spk { margin-left: 10px; } .bat { margin-left: 10px; }
.clock { width: 97px; text-align: right; white-space: nowrap; padding-bottom: 1px; letter-spacing: .1px; }
.bell { margin-left: 11px; } .copilot { margin-left: 21px; }
.pre { font: 700 8px "Open Sans", sans-serif; letter-spacing: .7px; fill: #222; }
```
